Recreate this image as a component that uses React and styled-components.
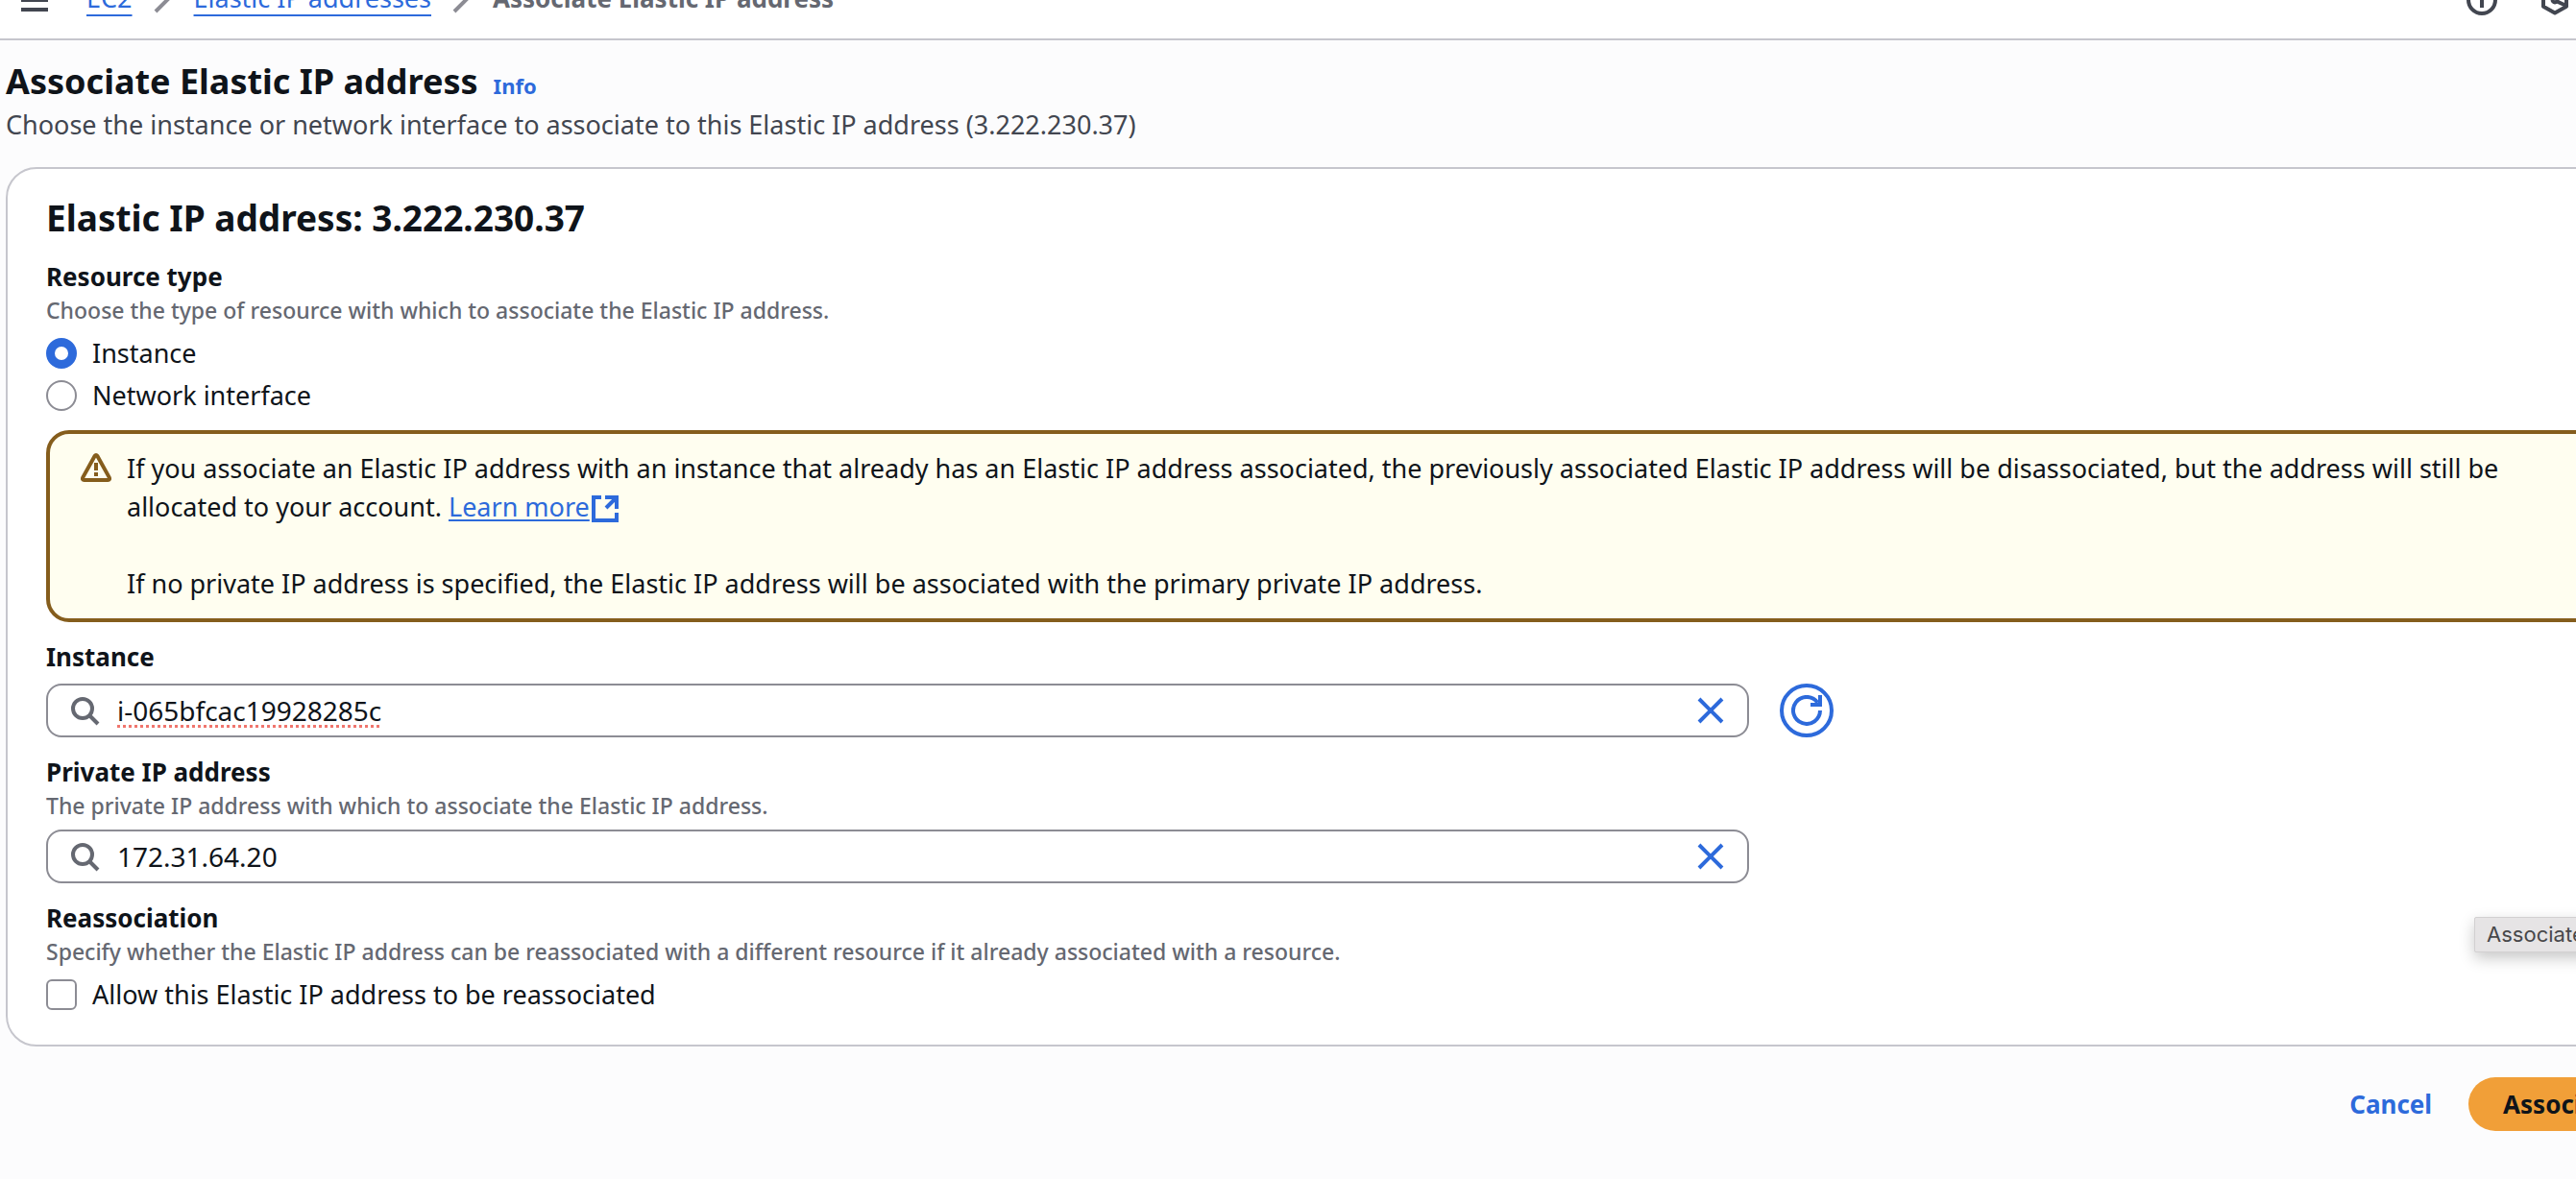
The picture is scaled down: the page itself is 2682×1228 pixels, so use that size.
import React, { useState } from "react";
import styled, { createGlobalStyle } from "styled-components";

const color = {
  text: "#0f141a",
  body: "#424650",
  muted: "#656871",
  link: "#2d6adb",
  line: "#c6c6cd",
  control: "#8c8c94",
  warning: "#855d1c",
  warningBg: "#fffef0",
  primary: "#f19f38",
};

const GlobalStyle = createGlobalStyle`
  *, *::before, *::after { box-sizing: border-box; }
  body {
    margin: 0;
    overflow-x: hidden;
    background: #fcfcfd;
    color: ${color.text};
    font: 400 27px/40px "Noto Sans", "Open Sans", sans-serif;
  }
  button, input { font: inherit; color: inherit; }
`;

const Page = styled.div`
  width: calc(100% + 84px);
  margin-top: -40px;
`;

const Glyph = styled.svg`
  display: block;
  flex: none;
  width: 32px;
  height: 32px;
  fill: none;
  stroke: currentColor;
  stroke-width: 2;
`;

const Icon = ({ children, ...rest }) => (
  <Glyph viewBox="0 0 16 16" aria-hidden="true" {...rest}>
    {children}
  </Glyph>
);

const TopBar = styled.header`
  display: flex;
  align-items: center;
  height: 82px;
  padding: 0 90px 0 20px;
  background: #fff;
  border-bottom: 2px solid ${color.line};
`;

const IconButton = styled.button`
  display: grid;
  place-items: center;
  flex: none;
  padding: 0;
  border: 0;
  background: none;
  color: ${(p) => p.$color || color.body};
  cursor: pointer;
`;

const Crumbs = styled.ol`
  display: flex;
  align-items: center;
  gap: 16px;
  margin: 0 auto 0 38px;
  padding: 0 0 4px;
  list-style: none;
`;

const Crumb = styled.li`
  display: flex;
  align-items: center;
  gap: 16px;
  color: ${color.muted};
  ${(p) => p.$current && "font-size: 26px; font-weight: 700;"}

  ${Glyph} {
    color: ${color.control};
  }
`;

const Link = styled.a`
  color: ${color.link};
  text-decoration: underline 2px;
  text-decoration-skip-ink: none;
  text-underline-offset: ${(p) => p.$offset || 3}px;
`;

const BarTools = styled.div`
  display: flex;
  gap: 44px;
`;

const Main = styled.main`
  padding: 18px 0 50px 6px;
`;

const TitleRow = styled.div`
  display: flex;
  align-items: baseline;
  gap: 16px;
`;

const Title = styled.h1`
  margin: 0;
  font-size: 36px;
  font-weight: 700;
  line-height: 50px;
`;

const InfoLink = styled.a`
  color: ${color.link};
  font-size: 22px;
  font-weight: 700;
  line-height: 30px;
  text-decoration: none;
`;

const Subtitle = styled.p`
  margin: 0 0 24px;
  color: ${color.body};
`;

const Card = styled.section`
  display: flex;
  flex-direction: column;
  gap: 16px;
  padding: 26px 40px 32px;
  background: #fff;
  border: 2px solid ${color.line};
  border-radius: 32px;
`;

const CardTitle = styled.h2`
  margin: 0;
  font-size: 37px;
  font-weight: 700;
  line-height: 50px;
`;

const Group = styled.fieldset`
  min-width: 0;
  margin: 0;
  padding: 0;
  border: 0;
`;

const Legend = styled.legend`
  padding: 0;
  font-size: 26px;
  font-weight: 700;
`;

const Label = styled.label`
  display: block;
  font-size: 26px;
  font-weight: 700;
`;

const Hint = styled.p`
  margin: 0 0 2px;
  color: ${color.muted};
  font-size: 23px;
  font-weight: 500;
  line-height: 30px;
`;

const Options = styled.div`
  display: flex;
  flex-direction: column;
  gap: 4px;
  padding-top: 8px;
`;

const Option = styled.label`
  display: flex;
  align-items: center;
  gap: 16px;
`;

const Radio = styled.input.attrs({ type: "radio" })`
  appearance: none;
  width: 32px;
  height: 32px;
  margin: 0;
  background: #fff;
  border: 2px solid ${color.control};
  border-radius: 50%;

  &:checked {
    border: 9px solid ${color.link};
  }
`;

const Checkbox = styled.input.attrs({ type: "checkbox" })`
  appearance: none;
  width: 32px;
  height: 32px;
  margin: 0;
  background: #fff;
  border: 2px solid ${color.control};
  border-radius: 6px;

  &:checked {
    background: ${color.link};
    border-color: ${color.link};
  }
`;

const Alert = styled.div`
  display: flex;
  gap: 16px;
  padding: 16px 16px 16px 32px;
  background: ${color.warningBg};
  border: 4px solid ${color.warning};
  border-radius: 24px;

  > ${Glyph} {
    margin-top: 4px;
    color: ${color.warning};
  }
`;

const AlertText = styled.div`
  display: flex;
  flex-direction: column;
  gap: 40px;

  p {
    margin: 0;
  }

  ${Glyph} {
    display: inline-block;
    vertical-align: -4px;
    margin: -4px 0;
  }
`;

const FieldRow = styled.div`
  display: grid;
  grid-template-columns: 2fr 1fr;
  gap: 16px;
  padding-top: 8px;
`;

const SearchBox = styled.div`
  display: flex;
  align-items: center;
  gap: 18px;
  height: 56px;
  padding: 0 22px;
  background: #fff;
  border: 2px solid ${color.control};
  border-radius: 16px;

  > ${Glyph} {
    color: ${color.muted};
  }
`;

const TextInput = styled.input`
  flex: 1;
  min-width: 0;
  height: 48px;
  padding: 0;
  border: 0;
  outline: 0;
  background: none;
  font-size: 28px;
  ${(p) =>
    p.$misspelt &&
    `text-decoration: underline dotted 3px #f0766e;
     text-decoration-skip-ink: none;
     text-underline-offset: 4px;`}
`;

const RefreshButton = styled(IconButton)`
  width: 56px;
  height: 56px;
  margin-left: 16px;
  border: 4px solid ${color.link};
  border-radius: 50%;
`;

const Footer = styled.footer`
  display: flex;
  justify-content: flex-end;
  gap: 16px;
  padding-top: 32px;
`;

const Button = styled.button`
  height: 56px;
  padding: 0 ${(p) => (p.$primary ? 36 : 22)}px;
  border: 0;
  border-radius: 28px;
  background: ${(p) => (p.$primary ? color.primary : "transparent")};
  color: ${(p) => (p.$primary ? color.text : color.link)};
  font-size: 26px;
  font-weight: 700;
  cursor: pointer;
`;

const TipAnchor = styled.div`
  position: relative;
`;

const Tooltip = styled.span`
  position: absolute;
  bottom: calc(100% + 130px);
  left: 6px;
  padding: 0 12px;
  background: #e6e4e5;
  border: 1px solid #d2d0d1;
  border-radius: 2px;
  box-shadow: 0 6px 16px rgba(0, 0, 0, 0.22);
  color: #48484a;
  font: 400 22px/35px Inter, sans-serif;
`;

const Chevron = () => (
  <Icon>
    <path d="m4 1 7 7-7 7" />
  </Icon>
);

function SearchField({ id, label, hint, initial, misspelt, action }) {
  const [value, setValue] = useState(initial);
  return (
    <div>
      <Label htmlFor={id}>{label}</Label>
      {hint && <Hint>{hint}</Hint>}
      <FieldRow>
        <SearchBox>
          <Icon>
            <circle cx="7" cy="7" r="5" />
            <path d="m15 15-4.5-4.5" />
          </Icon>
          <TextInput
            id={id}
            type="text"
            spellCheck={false}
            $misspelt={misspelt}
            value={value}
            onChange={(e) => setValue(e.target.value)}
          />
          <IconButton type="button" aria-label={`Clear ${label}`} $color={color.link} onClick={() => setValue("")}>
            <Icon>
              <path d="m2 2 12 12M14 2 2 14" />
            </Icon>
          </IconButton>
        </SearchBox>
        {action}
      </FieldRow>
    </div>
  );
}

export default function App() {
  const [resource, setResource] = useState("instance");
  const [allow, setAllow] = useState(false);

  return (
    <>
      <GlobalStyle />
      <Page>
        <TopBar>
          <IconButton type="button" aria-label="Open navigation">
            <Icon>
              <path d="M1 3h14M1 8h14M1 13h14" />
            </Icon>
          </IconButton>
          <Crumbs>
            <Crumb>
              <Link href="#ec2" $offset={7}>EC2</Link>
              <Chevron />
            </Crumb>
            <Crumb>
              <Link href="#addresses" $offset={7}>Elastic IP addresses</Link>
              <Chevron />
            </Crumb>
            <Crumb $current aria-current="page">Associate Elastic IP address</Crumb>
          </Crumbs>
          <BarTools>
            <IconButton type="button" aria-label="Information">
              <Icon>
                <circle cx="8" cy="8" r="7" />
                <path d="M8 7v5M8 4v2" />
              </Icon>
            </IconButton>
            <IconButton type="button" aria-label="Settings">
              <Icon>
                <path d="m8 1.2 6 3.4v6.8l-6 3.4-6-3.4V4.6Z" strokeLinejoin="round" />
                <circle cx="8" cy="8" r="1.2" />
                <path d="m8.5 8.5 5.5 2.5" />
              </Icon>
            </IconButton>
          </BarTools>
        </TopBar>

        <Main>
          <TitleRow>
            <Title>Associate Elastic IP address</Title>
            <InfoLink href="#info">Info</InfoLink>
          </TitleRow>
          <Subtitle>
            Choose the instance or network interface to associate to this Elastic IP address (3.222.230.37)
          </Subtitle>

          <Card>
            <CardTitle>Elastic IP address: 3.222.230.37</CardTitle>

            <Group>
              <Legend>Resource type</Legend>
              <Hint>Choose the type of resource with which to associate the Elastic IP address.</Hint>
              <Options>
                <Option>
                  <Radio
                    name="resource"
                    checked={resource === "instance"}
                    onChange={() => setResource("instance")}
                  />
                  Instance
                </Option>
                <Option>
                  <Radio
                    name="resource"
                    checked={resource === "interface"}
                    onChange={() => setResource("interface")}
                  />
                  Network interface
                </Option>
              </Options>
            </Group>

            <Alert role="note">
              <Icon>
                <path
                  d="M7.3 1.5Q8 .5 8.7 1.5L14.9 12.7Q15.3 14 14.2 14H1.8Q.7 14 1.1 12.7Z"
                  strokeLinejoin="round"
                />
                <path d="M8 5v4M8 10v2" />
              </Icon>
              <AlertText>
                <p>
                  If you associate an Elastic IP address with an instance that already has an Elastic IP address
                  associated, the previously associated Elastic IP address will be disassociated, but the address
                  will still be allocated to your account.{" "}
                  <Link href="#learn-more">
                    Learn more
                    <Icon>
                      <path d="M6 2H2v12h12v-4M8 2h6v6M14 2 8.5 7.5" />
                    </Icon>
                  </Link>
                </p>
                <p>
                  If no private IP address is specified, the Elastic IP address will be associated with the primary
                  private IP address.
                </p>
              </AlertText>
            </Alert>

            <SearchField
              id="instance"
              label="Instance"
              initial="i-065bfcac19928285c"
              misspelt
              action={
                <RefreshButton type="button" aria-label="Refresh instances" $color={color.link}>
                  <Icon>
                    <path d="M15 8a7 7 0 1 1-1.3-4.1M10 5h5V0" />
                  </Icon>
                </RefreshButton>
              }
            />

            <SearchField
              id="private-ip"
              label="Private IP address"
              hint="The private IP address with which to associate the Elastic IP address."
              initial="172.31.64.20"
            />

            <Group>
              <Legend>Reassociation</Legend>
              <Hint>
                Specify whether the Elastic IP address can be reassociated with a different resource if it already
                associated with a resource.
              </Hint>
              <Options>
                <Option>
                  <Checkbox checked={allow} onChange={(e) => setAllow(e.target.checked)} />
                  Allow this Elastic IP address to be reassociated
                </Option>
              </Options>
            </Group>
          </Card>

          <Footer>
            <Button type="button">Cancel</Button>
            <TipAnchor>
              <Button type="button" $primary>Associate</Button>
              <Tooltip role="tooltip">Associate</Tooltip>
            </TipAnchor>
          </Footer>
        </Main>
      </Page>
    </>
  );
}
